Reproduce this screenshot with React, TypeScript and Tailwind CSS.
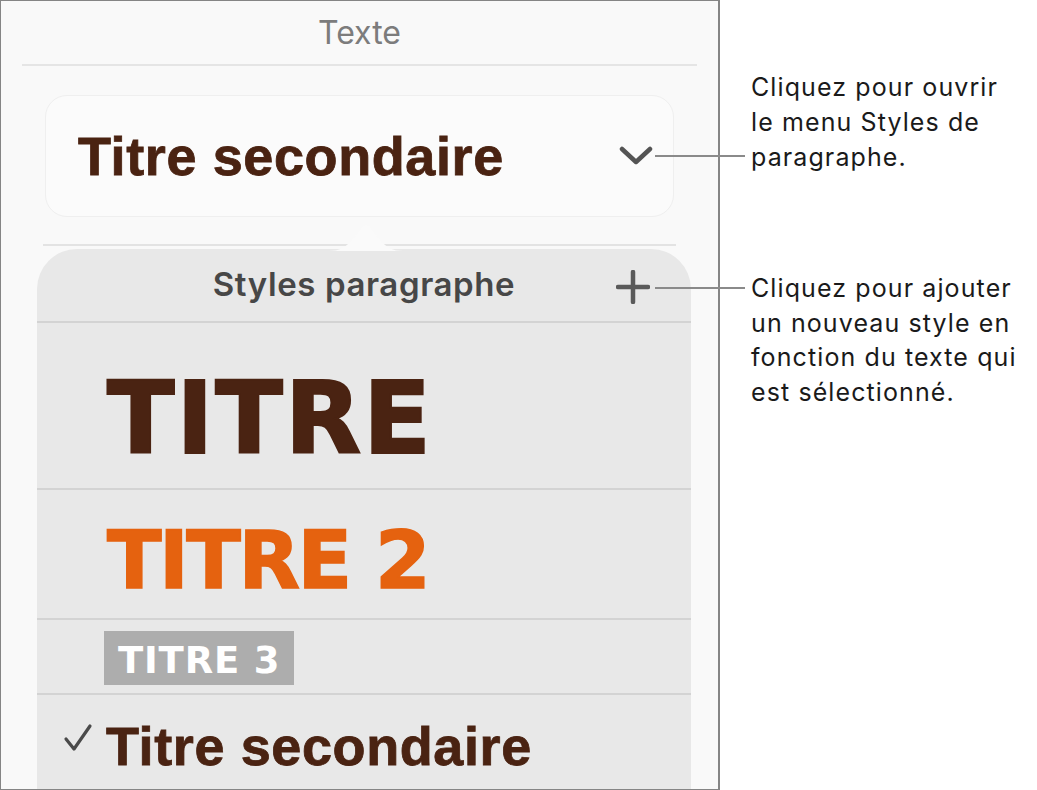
const HEAD = "font-['DejaVu_Sans',sans-serif] font-bold leading-none";
const SANS = "font-['Liberation_Sans',Arial,sans-serif]";
const UI = "font-['Inter','Liberation_Sans',sans-serif]";

function Chevron() {
  return (
    <svg width="34" height="20" viewBox="0 0 34 20" fill="none">
      <path d="M3 3 L17 16 L31 3" stroke="#545454" strokeWidth="4.5" strokeLinecap="round" strokeLinejoin="round" />
    </svg>
  );
}

function Plus() {
  return (
    <svg width="34" height="34" viewBox="0 0 34 34" fill="none">
      <path d="M17 2 V32 M2 17 H32" stroke="#5a5a5a" strokeWidth="4.5" strokeLinecap="round" />
    </svg>
  );
}

function Check() {
  return (
    <svg width="34" height="32" viewBox="0 0 34 32" fill="none">
      <path d="M4 17 L12 27 L28 4" stroke="#4a4a4a" strokeWidth="3.2" strokeLinecap="round" strokeLinejoin="round" />
    </svg>
  );
}

export default function App() {
  return (
    <div className="relative flex h-[790px] w-[1037px] overflow-hidden bg-white">
      {/* inspector panel */}
      <div className="flex h-[790px] w-[720px] shrink-0 flex-col border border-r-2 border-[#858585] bg-[#f9f9f9]">
        <div className={`flex h-[63px] items-center justify-center pt-[1px] text-[32px] text-[#7c7c7c] ${UI}`}>Texte</div>
        <div className="mx-[21px] h-[2px] bg-[#e5e5e5]" />

        <div className="mx-[44px] mt-[29px] flex h-[122px] items-center justify-between rounded-[22px] border border-[#efefef] bg-[#fbfbfb] pl-[32px] pr-[20px]">
          <span className={`text-[54px] font-bold leading-none tracking-[0.6px] text-[#4a2312] [-webkit-text-stroke:0.8px_#4a2312] ${SANS}`}>
            Titre secondaire
          </span>
          <Chevron />
        </div>

        <div className="relative mx-[42px] mt-[27px] h-[2px] bg-[#e3e3e3]">
          {/* popover arrow */}
          <svg className="absolute left-[286px] top-[-23px]" width="74" height="30" viewBox="0 0 74 30">
            <path d="M0 30 C10 30 16 27 24 18 L32 7 C35 3 39 3 42 7 L50 18 C58 27 64 30 74 30 Z" fill="#fafafa" />
          </svg>
        </div>

        {/* paragraph styles popover */}
        <div className="ml-[36px] mt-[3px] flex w-[654px] flex-1 flex-col rounded-t-[40px] bg-[#e8e8e8]">
          <div className="relative flex h-[74px] shrink-0 items-center justify-center border-b-2 border-[#d3d3d3]">
            <span className={`text-[33px] font-semibold tracking-[0.6px] text-[#474747] ${UI}`}>Styles paragraphe</span>
            <div className="absolute left-[579px] top-[21px]">
              <Plus />
            </div>
          </div>

          <div className="h-[167px] shrink-0 border-b-2 border-[#d3d3d3] pl-[70px] pt-[46px]">
            <span className={`text-[99px] tracking-[2px] text-[#4a2312] [-webkit-text-stroke:2px_#4a2312] ${HEAD}`}>TITRE</span>
          </div>

          <div className="h-[130px] shrink-0 border-b-2 border-[#d3d3d3] pl-[70px] pt-[31px]">
            <span className={`text-[80px] tracking-[-2.5px] text-[#e5620f] [-webkit-text-stroke:1.5px_#e5620f] ${HEAD}`}>TITRE 2</span>
          </div>

          <div className="h-[75px] shrink-0 border-b-2 border-[#d3d3d3] pl-[67px] pt-[11px]">
            <div className={`inline-block h-[54px] bg-[#adadad] px-[14px] pt-[11px] text-[37px] tracking-[0.8px] text-white ${HEAD}`}>
              TITRE 3
            </div>
          </div>

          <div className="flex items-start gap-[10px] pl-[25px] pt-[24px]">
            <div className="pt-[3px]">
              <Check />
            </div>
            <span className={`text-[54px] font-bold leading-none tracking-[0.6px] text-[#4a2312] [-webkit-text-stroke:0.8px_#4a2312] ${SANS}`}>
              Titre secondaire
            </span>
          </div>
        </div>
      </div>

      {/* callouts */}
      <div className={`flex flex-col pl-[31px] pt-[70px] text-[25px] tracking-[1.1px] text-[#1a1a1a] ${UI}`}>
        <p className="leading-[35px]">
          Cliquez pour ouvrir
          <br />
          le menu Styles de
          <br />
          paragraphe.
        </p>
        <p className="mt-[96px] leading-[34.5px]">
          Cliquez pour ajouter
          <br />
          un nouveau style en
          <br />
          fonction du texte qui
          <br />
          est sélectionné.
        </p>
      </div>

      <div className="absolute left-[655px] top-[155px] h-[2px] w-[90px] bg-[#8a8a8a]" />
      <div className="absolute left-[655px] top-[287px] h-[2px] w-[90px] bg-[#8a8a8a]" />
    </div>
  );
}
